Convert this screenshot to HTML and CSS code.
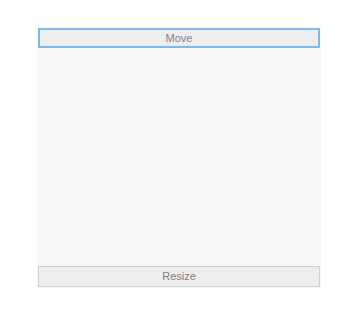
FILE: index.html
```html
<!DOCTYPE html>
<html>
<head>
   <meta charset="UTF-8">
   <link rel="stylesheet" href="styles.css">
</head>
<body>
<div class="panel">
   <div class="handle move">Move</div>
   <div class="content"></div>
   <div class="handle resize">Resize</div>
</div>
</body>
</html>
```

FILE: styles.css
```css
body {
   margin: 0;
   background: #fff;
   font-family: "Liberation Sans", Arial, sans-serif;
}

.panel {
   margin: 27px 0 0 37px;
   width: 284px;
   height: 261px;
   padding: 1px;
   box-sizing: border-box;
   background: #f7f7f7;
   display: flex;
   flex-direction: column;
}

.handle {
   box-sizing: border-box;
   background: #eeeeee;
   text-align: center;
   font-size: 11px;
}

.move {
   height: 20px;
   padding-top: 1px;
   line-height: 15px;
   border: 2px solid #7db9ec;
   color: #7e80a0;
}

.content {
   flex: 1;
}

.resize {
   height: 21px;
   line-height: 18px;
   border: 1px solid #d0d0d0;
   color: #808080;
}
```
